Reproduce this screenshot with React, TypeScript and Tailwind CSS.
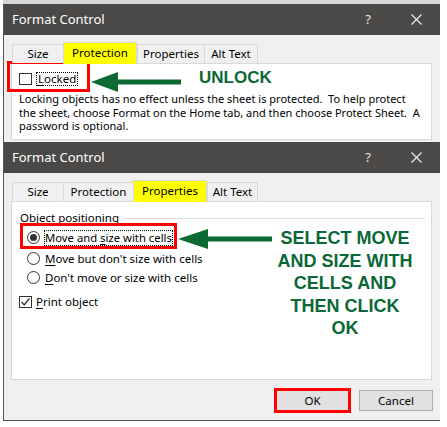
import { ReactNode } from 'react'

interface Tab {
  label: string
  cls: string
  active?: boolean
}

const GREEN = 'text-[#0a6836]'

function TitleBar() {
  return (
    <div className="h-[31px] bg-[#4b4947] flex items-center pl-[8px] text-white">
      <span className="text-[13px] leading-none">Format Control</span>
      <span className="ml-auto w-[8px] text-center text-[13px] leading-none text-[#e6e6e6]">?</span>
      <svg width="11" height="11" viewBox="0 0 11 11" className="ml-[39px] mr-[18px]">
        <path d="M0.5 0.5 L10.5 10.5 M10.5 0.5 L0.5 10.5" stroke="#f2f2f2" strokeWidth="1.1" />
      </svg>
    </div>
  )
}

function Tabs({ tabs }: { tabs: Tab[] }) {
  return (
    <div className="flex items-end h-[21px] mt-[7px] ml-[8px] relative z-10">
      {tabs.map((t, i) => (
        <div
          key={t.label}
          className={`${t.cls} flex items-center justify-center text-[11.5px] border-t border-l border-[#d9d9d9] ${
            i === tabs.length - 1 || t.active ? 'border-r' : ''
          } ${t.active ? 'h-[22px] mb-[-1px] bg-[#ffff00] pb-[2px]' : 'h-[19px] bg-[#f0f0f0]'}`}
        >
          {t.label}
        </div>
      ))}
    </div>
  )
}

function CheckBox({ checked }: { checked?: boolean }) {
  return (
    <div className="w-[13px] h-[12px] border border-[#333] bg-white flex items-center justify-center shrink-0">
      {checked && (
        <svg width="11" height="10" viewBox="0 0 11 10">
          <path d="M1.5 5 L4.2 7.8 L9.5 1.5" fill="none" stroke="#222" strokeWidth="1.2" />
        </svg>
      )}
    </div>
  )
}

function Radio({ selected }: { selected?: boolean }) {
  return (
    <div className="w-[13px] h-[13px] rounded-full border border-[#333] bg-white flex items-center justify-center shrink-0">
      {selected && <div className="w-[7px] h-[7px] rounded-full bg-[#333]" />}
    </div>
  )
}

function Arrow({ w, h, head, shaft }: { w: number; h: number; head: number; shaft: number }) {
  const mid = h / 2
  return (
    <svg width={w} height={h} viewBox={`0 0 ${w} ${h}`} className="shrink-0">
      <polygon
        points={`0,${mid} ${head},0 ${head},${mid - shaft / 2} ${w},${mid - shaft / 2} ${w},${mid + shaft / 2} ${head},${mid + shaft / 2} ${head},${h}`}
        fill="#0c6a33"
      />
    </svg>
  )
}

function Mnemonic({ children }: { children: ReactNode }) {
  return <span className="underline underline-offset-[2px]">{children}</span>
}

export default function App() {
  return (
    <div className="w-[447px] h-[427px] bg-white overflow-hidden text-black font-['Noto_Sans','Segoe_UI',sans-serif]">
      <div className="ml-[3px] w-[437px]">
        {/* top strip of the window above */}
        <div className="h-[4px] bg-[#d6d6d6]" />

        {/* dialog 1 */}
        <div className="border-l border-[#555]">
          <TitleBar />
          <div className="h-[107px] bg-[#f0f0f0] flex flex-col">
            <Tabs
              tabs={[
                { label: 'Size', cls: 'w-[51px]' },
                { label: 'Protection', cls: 'w-[74px]', active: true },
                { label: 'Properties', cls: 'w-[67px]' },
                { label: 'Alt Text', cls: 'w-[54px]' },
              ]}
            />
            <div className="ml-[7px] w-[421px] h-[77px] bg-white border border-[#d9d9d9]">
              <div className="flex items-start mt-[-3px] ml-[-5px] h-[31px] relative">
                <div className="w-[83px] h-[31px] border-[3px] border-[#ff0000] shrink-0">
                  <div className="mt-[8px] ml-[9px] flex items-center">
                    <CheckBox />
                    <span className="ml-[4px] px-[1px] h-[14px] border border-dotted border-black flex items-center text-[11.5px] leading-none">
                      <Mnemonic>L</Mnemonic>ocked
                    </span>
                  </div>
                </div>
                <div className="ml-[1px] mt-[11px]">
                  <Arrow w={90} h={20} head={27} shaft={5} />
                </div>
                <span className={`ml-[18px] mt-[8px] text-[17px] leading-[18px] font-black font-['Liberation_Sans',Arial,sans-serif] ${GREEN}`}>
                  UNLOCK
                </span>
              </div>
              <p className="ml-[7px] text-[11px] leading-[13.5px] whitespace-nowrap">
                Locking objects has no effect unless the sheet is protected.&nbsp; To help protect
                <br />
                the sheet, choose Format on the Home tab, and then choose Protect Sheet.&nbsp; A
                <br />
                password is optional.
              </p>
            </div>
          </div>
        </div>

        {/* dialog 2 */}
        <div className="border-l border-b border-[#555]">
          <TitleBar />
          <div className="h-[247px] bg-[#f0f0f0] flex flex-col">
            <Tabs
              tabs={[
                { label: 'Size', cls: 'w-[51px]' },
                { label: 'Protection', cls: 'w-[70px]' },
                { label: 'Properties', cls: 'w-[74px]', active: true },
                { label: 'Alt Text', cls: 'w-[51px]' },
              ]}
            />
            <div className="ml-[7px] w-[421px] h-[179px] bg-white border border-[#d9d9d9]">
              <div className="mt-[9px] flex items-center h-[14px]">
                <span className="ml-[8px] text-[11.5px] leading-none">Object positioning</span>
                <div className="flex-1 h-px bg-[#dcdcdc] ml-[6px] mr-[6px]" />
              </div>
              <div className="flex items-start mt-[-2px]">
                <div className="w-[166px] shrink-0">
                  <div className="ml-[8px] w-[157px] h-[26px] border-[3px] border-[#ff0000] flex items-center pt-[3px]">
                    <div className="ml-[4px]">
                      <Radio selected />
                    </div>
                    <span className="ml-[4px] h-[16px] border border-dotted border-black flex items-center text-[11.3px] leading-none whitespace-nowrap">
                      Move and&nbsp;<Mnemonic>s</Mnemonic>ize with cells
                    </span>
                  </div>
                  <div className="h-[19px] flex items-center pl-[15px]">
                    <Radio />
                    <span className="ml-[5px] text-[11.5px] leading-none whitespace-nowrap">
                      <Mnemonic>M</Mnemonic>ove but don't size with cells
                    </span>
                  </div>
                  <div className="h-[19px] flex items-center pl-[15px]">
                    <Radio />
                    <span className="ml-[5px] text-[11.5px] leading-none whitespace-nowrap">
                      <Mnemonic>D</Mnemonic>on't move or size with cells
                    </span>
                  </div>
                  <div className="h-[19px] mt-[5px] flex items-center pl-[7px]">
                    <CheckBox checked />
                    <span className="ml-[4px] text-[11.5px] leading-none">
                      <Mnemonic>P</Mnemonic>rint object
                    </span>
                  </div>
                </div>
                <div className="mt-[6px]">
                  <Arrow w={94} h={20} head={30} shaft={5} />
                </div>
                <div
                  className={`w-[146px] mt-[4px] text-center text-[18px] leading-[22.5px] font-black whitespace-nowrap font-['Liberation_Sans',Arial,sans-serif] ${GREEN}`}
                >
                  SELECT MOVE
                  <br />
                  AND SIZE WITH
                  <br />
                  CELLS AND
                  <br />
                  THEN CLICK
                  <br />
                  OK
                </div>
              </div>
            </div>
            <div className="mt-[8px] flex items-center justify-end pr-[7px] gap-[8px]">
              <div className="w-[77px] h-[25px] border-[3px] border-[#ff0000] bg-[#e1e1e1] flex items-center justify-center text-[11.5px]">
                OK
              </div>
              <div className="w-[74px] h-[21px] border border-[#adadad] bg-[#e1e1e1] flex items-center justify-center text-[11.5px]">
                Cancel
              </div>
            </div>
          </div>
        </div>
      </div>
    </div>
  )
}
